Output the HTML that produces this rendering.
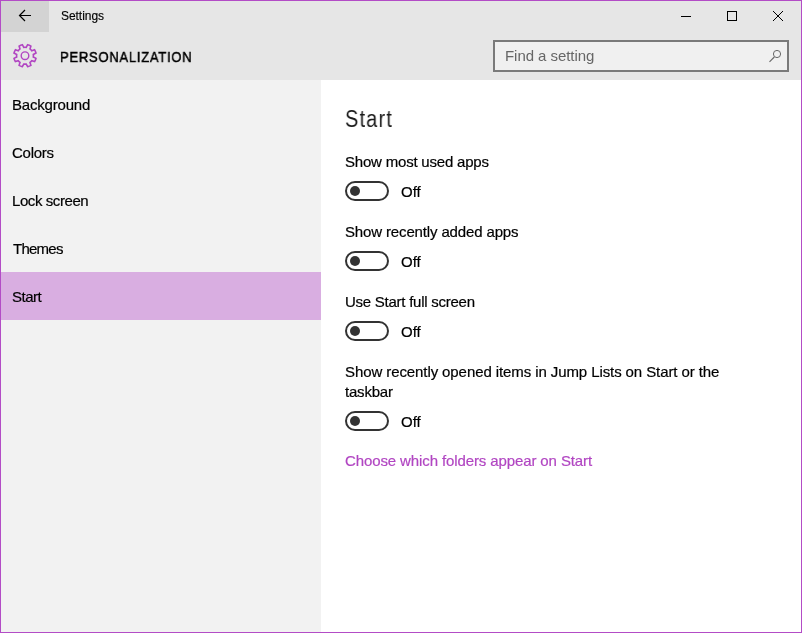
<!DOCTYPE html>
<html><head><meta charset="utf-8">
<style>
html,body{margin:0;padding:0;}
body{width:802px;height:633px;position:relative;overflow:hidden;background:#b34cc6;font-family:"Liberation Sans",sans-serif;color:#000;}
.abs{position:absolute;}
#win{position:absolute;left:1px;top:1px;width:800px;height:631px;background:#fff;overflow:hidden;}
#title{position:absolute;left:0;top:0;width:800px;height:31px;background:#e6e6e6;}
#back{position:absolute;left:0;top:0;width:48px;height:31px;background:#d3d3d3;}
#hdr{position:absolute;left:0;top:31px;width:800px;height:48px;background:#e6e6e6;}
#side{position:absolute;left:0;top:79px;width:320px;height:552px;background:#f2f2f2;}
#sel{position:absolute;left:0;top:271px;width:320px;height:48px;background:#d9aee1;}
.t{position:absolute;white-space:nowrap;line-height:1;will-change:transform;}
.nav{font-size:15px;left:11px;letter-spacing:-0.25px;-webkit-text-stroke:0.2px currentColor;}
.lbl{font-size:15px;left:344px;letter-spacing:-0.2px;-webkit-text-stroke:0.2px currentColor;}
.off{font-size:15px;left:400px;-webkit-text-stroke:0.2px currentColor;}
.tog{position:absolute;left:344px;width:40px;height:16px;border:2px solid #333;border-radius:10px;box-sizing:content-box;}
.knob{position:absolute;left:3px;top:3px;width:10px;height:10px;border-radius:50%;background:#333;}
</style></head>
<body>
<div id="win">
  <div id="title"></div>
  <div id="back"></div>
  <svg class="abs" style="left:0;top:0" width="48" height="31" viewBox="1 1 48 31">
    <path d="M19.5 15.5 L31 15.5 M25 10 L19.5 15.5 L25 21" fill="none" stroke="#000" stroke-width="1.2"/>
  </svg>
  <div class="t" style="left:59.5px;top:9px;font-size:12px;letter-spacing:-0.05px;-webkit-text-stroke:0.15px #000;">Settings</div>
  <svg class="abs" style="left:0;top:0" width="800" height="31" viewBox="1 1 800 31">
    <path d="M681 16.5 H691" stroke="#000" stroke-width="1"/>
    <rect x="727.5" y="11.5" width="9" height="9" fill="none" stroke="#000" stroke-width="1"/>
    <path d="M773 11 L783 21 M783 11 L773 21" stroke="#000" stroke-width="1"/>
  </svg>
  <div id="hdr"></div>
  <svg class="abs" style="left:0;top:0" width="60" height="80" viewBox="1 1 60 80">
    <path id="gear" d="M26.24 47.39 L27.64 44.71 A11.3 11.3 0 0 1 30.90 46.07 L30.00 48.95 A8.4 8.4 0 0 1 31.75 50.70 L34.63 49.80 A11.3 11.3 0 0 1 35.99 53.06 L33.31 54.46 A8.4 8.4 0 0 1 33.31 56.94 L35.99 58.34 A11.3 11.3 0 0 1 34.63 61.60 L31.75 60.70 A8.4 8.4 0 0 1 30.00 62.45 L30.90 65.33 A11.3 11.3 0 0 1 27.64 66.69 L26.24 64.01 A8.4 8.4 0 0 1 23.76 64.01 L22.36 66.69 A11.3 11.3 0 0 1 19.10 65.33 L20.00 62.45 A8.4 8.4 0 0 1 18.25 60.70 L15.37 61.60 A11.3 11.3 0 0 1 14.01 58.34 L16.69 56.94 A8.4 8.4 0 0 1 16.69 54.46 L14.01 53.06 A11.3 11.3 0 0 1 15.37 49.80 L18.25 50.70 A8.4 8.4 0 0 1 20.00 48.95 L19.10 46.07 A11.3 11.3 0 0 1 22.36 44.71 L23.76 47.39 A8.4 8.4 0 0 1 26.24 47.39 Z" fill="none" stroke="#b146c2" stroke-width="1.6"/>
    <circle cx="25" cy="55.7" r="3.8" fill="none" stroke="#b146c2" stroke-width="1.4"/>
  </svg>
  <div class="t" style="left:58.5px;top:47.5px;font-size:15.5px;font-weight:400;-webkit-text-stroke:0.5px #000;letter-spacing:0.88px;transform:scaleX(0.84);transform-origin:0 0;">PERSONALIZATION</div>
  <div class="abs" style="left:492px;top:39px;width:292px;height:28px;border:2px solid #7a7a7a;background:#f0f0f0;"></div>
  <div class="t" style="left:504px;top:47px;font-size:15px;color:#666;letter-spacing:-0.05px;">Find a setting</div>
  <svg class="abs" style="left:0;top:0" width="800" height="80" viewBox="1 1 800 80">
    <circle cx="777" cy="54" r="3.6" fill="none" stroke="#666" stroke-width="1"/>
    <path d="M774.3 57 L769.5 61.8" stroke="#666" stroke-width="1.1"/>
  </svg>
  <div id="side"></div>
  <div id="sel"></div>
  <div class="t nav" style="top:96px;letter-spacing:-0.2px;">Background</div>
  <div class="t nav" style="top:144px;">Colors</div>
  <div class="t nav" style="top:192px;letter-spacing:-0.42px;">Lock screen</div>
  <div class="t nav" style="top:240px;left:12px;letter-spacing:-0.75px;">Themes</div>
  <div class="t nav" style="top:288px;letter-spacing:-0.5px;">Start</div>

  <div class="t" style="left:344px;top:107px;font-size:23px;letter-spacing:1.3px;transform:scaleX(0.87);transform-origin:0 0;color:#1a1a1a;">Start</div>

  <div class="t lbl" style="top:153px;">Show most used apps</div>
  <div class="tog" style="top:180px;"><div class="knob"></div></div>
  <div class="t off" style="top:183px;">Off</div>

  <div class="t lbl" style="top:223px;letter-spacing:-0.14px;">Show recently added apps</div>
  <div class="tog" style="top:250px;"><div class="knob"></div></div>
  <div class="t off" style="top:253px;">Off</div>

  <div class="t lbl" style="top:293px;letter-spacing:-0.25px;">Use Start full screen</div>
  <div class="tog" style="top:320px;"><div class="knob"></div></div>
  <div class="t off" style="top:323px;">Off</div>

  <div class="t lbl" style="top:363px;letter-spacing:-0.09px;">Show recently opened items in Jump Lists on Start or the</div>
  <div class="t lbl" style="top:383px;">taskbar</div>
  <div class="tog" style="top:410px;"><div class="knob"></div></div>
  <div class="t off" style="top:413px;">Off</div>

  <div class="t lbl" style="top:452px;left:344px;color:#b146c2;letter-spacing:-0.11px;">Choose which folders appear on Start</div>
</div>
</body></html>
